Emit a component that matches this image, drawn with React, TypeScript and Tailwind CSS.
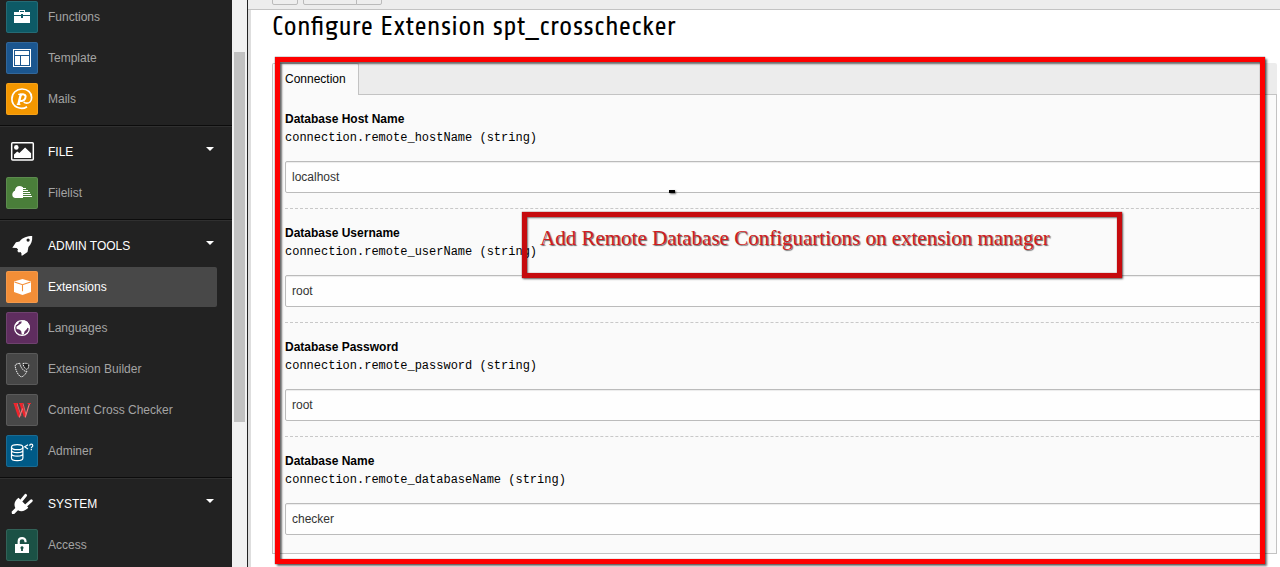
import React from 'react';

type Entry = { label: string; tile: string; icon: React.ReactNode; active?: boolean };
type Group = { heading?: string; icon?: React.ReactNode; entries: Entry[] };

function Glyph({ children }: { children: React.ReactNode }) {
  return (
    <svg viewBox="0 0 32 32" className="block h-full w-full" fill="#fff" aria-hidden="true">
      {children}
    </svg>
  );
}

const briefcase = (
  <>
    <path fillRule="evenodd" d="M13 11V9h6v2h5v3h-7v-1h-2v1H8v-3zm1 0h4v-1h-4z" />
    <path d="M8 15h7v2h2v-2h7v7H8z" />
  </>
);

const template = (
  <>
    <path fillRule="evenodd" d="M7 7h18v18H7zm1 1v16h16V8z" />
    <path d="M9 9h14v4H9zM9 14h5v9H9zM15 14h8v9h-8z" />
  </>
);

const mails = (
  <>
    <path
      d="M21 23.7C15 27.700 5.900 24 5.900 16 5.900 10 10.500 6 16 6c5.600 0 9.600 3.600 9.600 8.400 0 3.800-2.400 5.800-4.800 5.800-1.500 0-2.400-.5-3-1.200"
      fill="none"
      stroke="#fff"
      strokeWidth="1.700"
    />
    <g fill="none" stroke="#fff" strokeWidth="2.400">
      <path d="M15 10.500l-2.700 11.300" />
      <path d="M14.600 12.300c1.700-1.500 5-1.300 5 1.300 0 3-2.600 5-5.800 4.200" strokeWidth="2" />
      <path d="M12.200 11.300h2.800M10.800 21.400h3.600" strokeWidth="1.300" />
    </g>
  </>
);

const picture = (
  <>
    <rect x="5.700" y="6.800" width="21.600" height="17.200" rx="1" fill="none" stroke="#fff" strokeWidth="1.500" />
    <circle cx="10.300" cy="11.400" r="2.300" />
    <path d="M8 22v-3.500l3.200-3 2.200 1.600 5.700-5.600 6 5.800V22z" />
  </>
);

const cloudList = (
  <>
    <path d="M16.200 21H9.600a3.400 3.400 0 0 1-3.300-3.500c0-1.800 1.100-3.100 2.600-3.700C9.100 11 11 9 13.600 9c1 0 1.900.3 2.600.8z" />
    <path d="M17 11h3v1h-3zM17 13h5v1h-5zM17 15h7v1h-7zM17 17h8v1h-8zM17 19h9v1h-9z" />
    <path d="M16 10h1v11h-1z" />
  </>
);

const rocket = (
  <path
    fillRule="evenodd"
    d="M26.200 6c-5 0-9.300 1.300-12.700 5.400l-3.500.9-3.700 5.400 4.300.3 1.500 1.400-.8 1.600 1.500 1.500 1.700-.6 1 1.500-.1 2 1.100.1 5-3.500.9-5C25.300 14.300 26.500 11 26.200 6zm-4.100 2.500a1.600 1.600 0 1 0 0 3.200 1.600 1.600 0 0 0 0-3.200z"
  />
);

const cube = (
  <>
    <path d="M16.500 8L25 10.500v10.600L16.500 24 8 21.100V10.500z" />
    <path d="M8.500 10.900l8 2.800 8-2.800M16.500 13.700v6.600" fill="none" stroke="#f38e37" strokeWidth="1.100" />
  </>
);

const globe = (
  <>
    <circle cx="16" cy="16" r="7.400" fill="none" stroke="#fff" strokeWidth="1.300" />
    <path d="M13.500 12.500l2-1.500-.2-1.500 2.700-1.300 3.500 1.500 2.300 4.300-.6 2.500-1.700-.7-1 1.600-2 2-.6 2.600-2 .7-.8-3.600-1.800-1.600-2.600-.5-.3-2.300z" />
    <path d="M9 13l2-3.200 2-.8-.6 2.200-2 1.800z" />
  </>
);

const shield = (
  <g fill="none" stroke="#f4f4f4" strokeWidth="1" strokeDasharray="1.500 .7">
    <path d="M13.800 10.300c-2 .2-4.200.9-4.500 1.700-.6 3.500 2.800 10.800 5.700 11.800 2 .3 4.600-2.500 6-5.600-3.200 1.300-7-4.900-7.200-7.900z" />
    <path d="M17 10.500c2.500-.5 5.200-.2 5.700 1 .3 1.700-.5 4.500-1.800 4.800-1.500.1-3.900-3.800-3.900-5.800z" fill="#222" />
  </g>
);

const crossedStrokes = (
  <g fill="none" stroke="#f0242c">
    <path d="M9 9.500l4.300 13M14.800 9.500l4.300 13" strokeWidth="2.600" />
    <path d="M11 9.500l4 12M17 9.500l3 11" stroke="#f4777b" strokeWidth=".8" />
    <path d="M13.300 23.500l3.300-9M19.200 23.500l4.300-14" stroke="#f4777b" strokeWidth="1.100" />
    <path d="M7.500 9.500h4.500M13 9.500h4.500M21.500 9.500h3.500" strokeWidth="1" />
  </g>
);

const database = (
  <g fill="none" stroke="#fff" strokeWidth="1.200">
    <ellipse cx="11.200" cy="12.200" rx="5.700" ry="2.500" />
    <path d="M5.500 12.200v3c0 3.200 11.400 3.200 11.400 0v-3M5.500 15.400v3.400c0 3.200 11.400 3.200 11.400 0v-3.400M5.500 18.900v4c0 3.600 11.400 3.600 11.400 0v-4" />
    <path d="M22 9.700l-3.300 2.100 3.300 2.100" />
    <path d="M23.700 10.700c0-2 3.100-2 3.100 0 0 1.200-1.500 1.200-1.500 2.500M25.300 14v1.300" />
  </g>
);

const plug = (
  <>
    <path d="M12.500 9.700L22.300 19.500c-2.600 3.500-7 4.600-10.300 2.800L8.200 26H6l-.4-2.300L9.300 20c-1.800-3.600-.7-7.500 3.200-10.300z" />
    <path
      d="M15.300 12.600l4.300-5.200M20.300 17.300l5-4.600"
      fill="none"
      stroke="#fff"
      strokeWidth="2.900"
      strokeLinecap="round"
    />
  </>
);

const padlock = (
  <>
    <path d="M12.700 15.500v-3.300c0-4.200 6.800-4.200 6.800 0v1" fill="none" stroke="#fff" strokeWidth="2.200" />
    <path fillRule="evenodd" d="M9 15h14v9H9zm7 2.200a1.600 1.600 0 0 0-.9 2.900V22h1.800v-1.900a1.600 1.600 0 0 0-.9-2.900z" />
  </>
);

const groups: Group[] = [
  {
    entries: [
      { label: 'Functions', tile: 'bg-[#0d5a66]', icon: briefcase },
      { label: 'Template', tile: 'bg-[#1b568f]', icon: template },
      { label: 'Mails', tile: 'bg-[#f49700]', icon: mails },
    ],
  },
  {
    heading: 'FILE',
    icon: picture,
    entries: [{ label: 'Filelist', tile: 'bg-[#4a7e3a]', icon: cloudList }],
  },
  {
    heading: 'ADMIN TOOLS',
    icon: rocket,
    entries: [
      { label: 'Extensions', tile: 'bg-[#f38e37]', icon: cube, active: true },
      { label: 'Languages', tile: 'bg-[#5f2d5f]', icon: globe },
      { label: 'Extension Builder', tile: 'bg-[#464646]', icon: shield },
      { label: 'Content Cross Checker', tile: 'bg-[#484848]', icon: crossedStrokes },
      { label: 'Adminer', tile: 'bg-[#005a87]', icon: database },
    ],
  },
  {
    heading: 'SYSTEM',
    icon: plug,
    entries: [{ label: 'Access', tile: 'bg-[#1b5145]', icon: padlock }],
  },
];

const fields = [
  { id: 'remote_hostName', title: 'Database Host Name', value: 'localhost' },
  { id: 'remote_userName', title: 'Database Username', value: 'root' },
  { id: 'remote_password', title: 'Database Password', value: 'root' },
  { id: 'remote_databaseName', title: 'Database Name', value: 'checker' },
];

function MenuGroup({ group }: { group: Group }) {
  return (
    <section className={group.heading ? 'border-t border-[#0c0c0c]' : ''}>
      <div className={group.heading ? 'border-t border-[#303030] pt-[5px] pb-[6px]' : 'pb-[6px]'}>
        {group.heading && (
          <button
            type="button"
            aria-expanded="true"
            className="mb-px flex h-10 w-full items-center gap-[10px] pr-[18px] pl-[6px] text-left text-white"
          >
            <span className="h-8 w-8 shrink-0">
              <Glyph>{group.icon}</Glyph>
            </span>
            <span className="grow">{group.heading}</span>
            <svg viewBox="0 0 8 4" className="mb-[6px] h-1 w-2" fill="#fff" aria-hidden="true">
              <path d="M0 0h8L4 4z" />
            </svg>
          </button>
        )}
        <ul className="flex flex-col gap-px">
          {group.entries.map((entry) => (
            <li key={entry.label} className="pr-[15px]">
              <a
                href="#"
                className={
                  entry.active
                    ? 'flex h-10 items-center gap-[10px] rounded-r-[2px] bg-[#484848] pl-[6px] text-white'
                    : 'flex h-10 items-center gap-[10px] pl-[6px] text-[#a4a4a4]'
                }
              >
                <span className={`relative h-8 w-8 shrink-0 overflow-hidden rounded-[2px] ${entry.tile}`}>
                  <Glyph>{entry.icon}</Glyph>
                  <span className="absolute inset-0 rounded-[2px] border border-white/10" />
                </span>
                <span>{entry.label}</span>
              </a>
            </li>
          ))}
        </ul>
      </div>
    </section>
  );
}

export default function App() {
  return (
    <div className="flex h-screen overflow-hidden bg-white font-['Liberation_Sans',Arial,sans-serif] text-xs text-black">
      <nav aria-label="Modules" className="w-[232px] shrink-0 overflow-hidden bg-[#222]">
        <div className="-mt-[3px]">
          {groups.map((group, i) => (
            <MenuGroup key={i} group={group} />
          ))}
        </div>
      </nav>
      <div className="w-[15px] shrink-0 bg-[#f1f1f1] px-[2px] pt-[52px]" aria-hidden="true">
        <div className="h-[370px] w-[11px] bg-[#c1c1c1]" />
      </div>
      <div className="w-px shrink-0 bg-[#222]" />

      <main className="flex min-w-0 grow flex-col">
        <header className="flex h-[10px] shrink-0 items-end overflow-hidden border-b border-[#c3c3c3] bg-[#ededed] pb-1 pl-6">
          <button type="button" aria-label="Close" className="h-6 w-[26px] rounded-[2px] border border-[#bbb] bg-[#eee]" />
          <button
            type="button"
            aria-label="Save"
            className="ml-[5px] h-6 w-[54px] rounded-l-[2px] border border-[#bbb] bg-[#eee]"
          />
          <button
            type="button"
            aria-label="More save options"
            className="-ml-px h-6 w-[26px] rounded-r-[2px] border border-[#bbb] bg-[#eee]"
          />
        </header>

        <div className="grow border-l-[3px] border-[#dedede] pr-[3px] pl-[21px]">
          <h1 className="h-[53px] pt-px font-['Share','Liberation_Sans_Narrow','Open_Sans_Condensed','Noto_Sans',sans-serif] text-[27px] leading-8 whitespace-nowrap">
            Configure Extension spt_crosschecker
          </h1>

          <div className="relative">
            <div role="tablist" className="flex h-8 rounded-t-[2px] bg-[#ececec]">
              <button
                type="button"
                role="tab"
                aria-selected="true"
                className="h-8 w-[87px] rounded-t-[2px] border border-b-0 border-[#c3c3c3] bg-[#fafafa] pb-[2px] pl-3 text-left"
              >
                Connection
              </button>
              <div className="grow border-b border-[#c3c3c3]" />
            </div>
            <form className="border border-t-0 border-[#c3c3c3] bg-[#fafafa] px-3 pb-[3px]">
              {fields.map((field) => (
                <div key={field.id} className="border-b border-dashed border-[#c8c8c8] py-[15px] last:border-b-0">
                  <label htmlFor={field.id} className="block">
                    <span className="block leading-[18px] font-bold">{field.title}</span>
                    <code className="block font-['Liberation_Mono',monospace] text-xs leading-5">
                      connection.{field.id} (string)
                    </code>
                  </label>
                  <input
                    id={field.id}
                    type="text"
                    defaultValue={field.value}
                    className="mt-[13px] block h-8 w-full rounded-[2px] border border-[#bbb] bg-[#fefefe] px-[6px] text-[#333] shadow-[inset_0_1px_1px_rgba(0,0,0,0.075)] outline-none"
                  />
                </div>
              ))}
            </form>

            <div className="pointer-events-none absolute -top-[6px] right-3 -bottom-[10px] left-[3px] z-20 border-[5px] border-[#fe0000] shadow-[0_0_1px_rgba(0,0,0,0.8),2px_2px_2px_rgba(0,0,0,0.55),inset_0_0_1px_rgba(0,0,0,0.8),inset_2px_2px_2px_rgba(0,0,0,0.55)]" />
            <div className="absolute top-[127px] left-[397px] z-20 h-[3px] w-[6px] bg-black shadow-[1px_1px_2px_rgba(0,0,0,0.6)]" />
            <div className="pointer-events-none absolute top-[149px] left-[250px] z-20 h-[66px] w-[600px] border-[5px] border-[#c60b0e] pt-[9px] pl-[13px] shadow-[0_0_1px_rgba(100,0,0,0.8),1px_1px_2px_rgba(0,0,0,0.6),inset_0_0_1px_rgba(100,0,0,0.8),inset_1px_1px_2px_rgba(0,0,0,0.5)]">
              <p className="font-['Liberation_Serif',serif] text-[21px] leading-6 whitespace-nowrap text-[#d01c20] [text-shadow:1px_1px_1px_rgba(0,0,0,0.6)]">
                Add Remote Database Configuartions on extension manager
              </p>
            </div>
          </div>
        </div>
      </main>
    </div>
  );
}
